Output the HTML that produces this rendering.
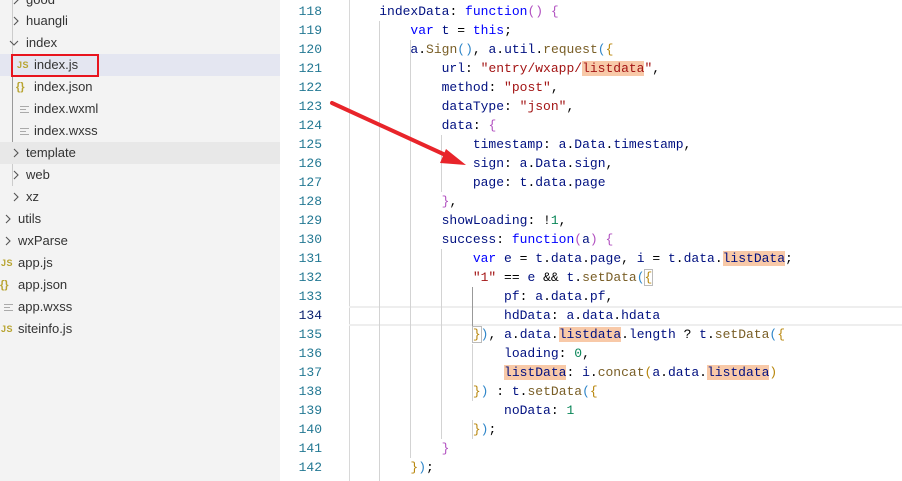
<!DOCTYPE html>
<html><head><meta charset="utf-8"><style>
*{margin:0;padding:0;box-sizing:border-box}
body{width:902px;height:481px;overflow:hidden;background:#fff;position:relative;font-family:"Liberation Sans",sans-serif}
#side{position:absolute;left:0;top:0;width:280px;height:481px;background:#f3f3f3}
.row{position:absolute;left:0;width:280px;height:22px;font-size:13px;color:#333;line-height:22px;white-space:nowrap}
.row span{position:absolute}
.row svg{position:absolute;top:6px}
.js{color:#b8a431;font-weight:bold;font-size:9px;letter-spacing:0.5px}
.br{color:#b8a431;font-size:11px;font-weight:bold}
.lines{position:absolute;width:9px;height:7px;border-top:1px solid #aaa;border-bottom:1px solid #aaa}
.lines:after{content:"";position:absolute;left:0;top:2px;width:6px;border-top:1px solid #aaa}
.guide{position:absolute;width:1px;background:#c8c8c8}
#code{position:absolute;left:280px;top:0;width:622px;height:481px}
.ln{position:absolute;left:0;width:42px;text-align:right;font-family:"Liberation Mono",monospace;font-size:13px;color:#237893;height:19px;line-height:19px}
.cl{position:absolute;left:68px;font-family:"Liberation Mono",monospace;font-size:13px;white-space:pre;height:19px;line-height:19px;color:#000}
.i{color:#001080}.k{color:#0000ff}.f{color:#795e26}.s{color:#a31515}.n{color:#098658}
.b1{color:#b8860b}.b2{color:#b150c0}.b3{color:#2f86c9}
.h{background:#f8c9a8}
.ig{position:absolute;width:1px;background:#d3d3d3}
</style></head><body>
<div id="side">
<div class="guide" style="left:12px;top:0;height:186px;background:#ccc"></div>
<div class="guide" style="left:12px;top:76px;height:66px;background:#999"></div>
<div class="row" style="top:-11px"><svg style="left:12px" width="8" height="10"><polyline points="2,1 6,5 2,9" fill="none" stroke="#555" stroke-width="1.1"/></svg><span style="left:26px">good</span></div>
<div class="row" style="top:10px"><svg style="left:12px" width="8" height="10"><polyline points="2,1 6,5 2,9" fill="none" stroke="#555" stroke-width="1.1"/></svg><span style="left:26px">huangli</span></div>
<div class="row" style="top:32px"><svg style="left:9px;top:8px" width="10" height="7"><polyline points="1,1 5,5 9,1" fill="none" stroke="#555" stroke-width="1.1"/></svg><span style="left:26px">index</span></div>
<div class="row" style="top:54px;background:#e4e6f1"><span class="js" style="left:17px">JS</span><span style="left:34px">index.js</span></div>
<div style="position:absolute;left:11px;top:54px;width:88px;height:23px;border:2px solid #e8141e"></div>
<div class="row" style="top:76px"><span class="br" style="left:16px">{}</span><span style="left:34px">index.json</span></div>
<div class="row" style="top:98px"><div class="lines" style="left:20px;top:8px"></div><span style="left:34px">index.wxml</span></div>
<div class="row" style="top:120px"><div class="lines" style="left:20px;top:8px"></div><span style="left:34px">index.wxss</span></div>
<div class="row" style="top:142px;background:#e8e8e8"><svg style="left:12px" width="8" height="10"><polyline points="2,1 6,5 2,9" fill="none" stroke="#555" stroke-width="1.1"/></svg><span style="left:26px">template</span></div>
<div class="row" style="top:164px"><svg style="left:12px" width="8" height="10"><polyline points="2,1 6,5 2,9" fill="none" stroke="#555" stroke-width="1.1"/></svg><span style="left:26px">web</span></div>
<div class="row" style="top:186px"><svg style="left:12px" width="8" height="10"><polyline points="2,1 6,5 2,9" fill="none" stroke="#555" stroke-width="1.1"/></svg><span style="left:26px">xz</span></div>
<div class="row" style="top:208px"><svg style="left:4px" width="8" height="10"><polyline points="2,1 6,5 2,9" fill="none" stroke="#555" stroke-width="1.1"/></svg><span style="left:18px">utils</span></div>
<div class="row" style="top:230px"><svg style="left:4px" width="8" height="10"><polyline points="2,1 6,5 2,9" fill="none" stroke="#555" stroke-width="1.1"/></svg><span style="left:18px">wxParse</span></div>
<div class="row" style="top:252px"><span class="js" style="left:1px">JS</span><span style="left:18px">app.js</span></div>
<div class="row" style="top:274px"><span class="br" style="left:0px">{}</span><span style="left:18px">app.json</span></div>
<div class="row" style="top:296px"><div class="lines" style="left:4px;top:8px"></div><span style="left:18px">app.wxss</span></div>
<div class="row" style="top:318px"><span class="js" style="left:1px">JS</span><span style="left:18px">siteinfo.js</span></div>
</div>
<div id="code">
<div style="position:absolute;left:69px;top:0;width:1px;height:481px;background:#d8d8d8"></div>
<div style="position:absolute;left:69px;top:306px;width:553px;height:20px;border-top:2px solid #eee;border-bottom:2px solid #eee"></div>
<div class="ig" style="left:99px;top:21px;height:460px"></div>
<div class="ig" style="left:130px;top:40px;height:418px"></div>
<div class="ig" style="left:161px;top:135px;height:57px"></div>
<div class="ig" style="left:161px;top:249px;height:190px"></div>
<div class="ig" style="left:192px;top:287px;height:48px;background:#999"></div>
<div class="ig" style="left:192px;top:344px;height:57px"></div>
<div class="ig" style="left:192px;top:420px;height:19px"></div>

<div class="ln" style="top:-17px">117</div><div class="cl" style="top:-17px">    <span class="b1">}</span>,</div>
<div class="ln" style="top:2px">118</div><div class="cl" style="top:2px">    <span class="i">indexData</span>: <span class="k">function</span><span class="b2">()</span> <span class="b2">{</span></div>
<div class="ln" style="top:21px">119</div><div class="cl" style="top:21px">        <span class="k">var</span> <span class="i">t</span> = <span class="k">this</span>;</div>
<div class="ln" style="top:40px">120</div><div class="cl" style="top:40px">        <span class="i">a</span>.<span class="f">Sign</span><span class="b3">()</span>, <span class="i">a</span>.<span class="i">util</span>.<span class="f">request</span><span class="b3">(</span><span class="b1">{</span></div>
<div class="ln" style="top:59px">121</div><div class="cl" style="top:59px">            <span class="i">url</span>: <span class="s">"entry/wxapp/<span class="h">listdata</span>"</span>,</div>
<div class="ln" style="top:78px">122</div><div class="cl" style="top:78px">            <span class="i">method</span>: <span class="s">"post"</span>,</div>
<div class="ln" style="top:97px">123</div><div class="cl" style="top:97px">            <span class="i">dataType</span>: <span class="s">"json"</span>,</div>
<div class="ln" style="top:116px">124</div><div class="cl" style="top:116px">            <span class="i">data</span>: <span class="b2">{</span></div>
<div class="ln" style="top:135px">125</div><div class="cl" style="top:135px">                <span class="i">timestamp</span>: <span class="i">a</span>.<span class="i">Data</span>.<span class="i">timestamp</span>,</div>
<div class="ln" style="top:154px">126</div><div class="cl" style="top:154px">                <span class="i">sign</span>: <span class="i">a</span>.<span class="i">Data</span>.<span class="i">sign</span>,</div>
<div class="ln" style="top:173px">127</div><div class="cl" style="top:173px">                <span class="i">page</span>: <span class="i">t</span>.<span class="i">data</span>.<span class="i">page</span></div>
<div class="ln" style="top:192px">128</div><div class="cl" style="top:192px">            <span class="b2">}</span>,</div>
<div class="ln" style="top:211px">129</div><div class="cl" style="top:211px">            <span class="i">showLoading</span>: !<span class="n">1</span>,</div>
<div class="ln" style="top:230px">130</div><div class="cl" style="top:230px">            <span class="i">success</span>: <span class="k">function</span><span class="b2">(</span><span class="i">a</span><span class="b2">)</span> <span class="b2">{</span></div>
<div class="ln" style="top:249px">131</div><div class="cl" style="top:249px">                <span class="k">var</span> <span class="i">e</span> = <span class="i">t</span>.<span class="i">data</span>.<span class="i">page</span>, <span class="i">i</span> = <span class="i">t</span>.<span class="i">data</span>.<span class="i h">listData</span>;</div>
<div class="ln" style="top:268px">132</div><div class="cl" style="top:268px">                <span class="s">"1"</span> == <span class="i">e</span> &amp;&amp; <span class="i">t</span>.<span class="f">setData</span><span class="b3">(</span><span class="b1" style="outline:1px solid #bbb">{</span></div>
<div class="ln" style="top:287px">133</div><div class="cl" style="top:287px">                    <span class="i">pf</span>: <span class="i">a</span>.<span class="i">data</span>.<span class="i">pf</span>,</div>
<div class="ln" style="top:306px;color:#0b216f">134</div><div class="cl" style="top:306px">                    <span class="i">hdData</span>: <span class="i">a</span>.<span class="i">data</span>.<span class="i">hdata</span></div>
<div class="ln" style="top:325px">135</div><div class="cl" style="top:325px">                <span class="b1" style="outline:1px solid #bbb">}</span><span class="b3">)</span>, <span class="i">a</span>.<span class="i">data</span>.<span class="i h">listdata</span>.<span class="i">length</span> ? <span class="i">t</span>.<span class="f">setData</span><span class="b3">(</span><span class="b1">{</span></div>
<div class="ln" style="top:344px">136</div><div class="cl" style="top:344px">                    <span class="i">loading</span>: <span class="n">0</span>,</div>
<div class="ln" style="top:363px">137</div><div class="cl" style="top:363px">                    <span class="i h">listData</span>: <span class="i">i</span>.<span class="f">concat</span><span class="b1">(</span><span class="i">a</span>.<span class="i">data</span>.<span class="i h">listdata</span><span class="b1">)</span></div>
<div class="ln" style="top:382px">138</div><div class="cl" style="top:382px">                <span class="b1">}</span><span class="b3">)</span> : <span class="i">t</span>.<span class="f">setData</span><span class="b3">(</span><span class="b1">{</span></div>
<div class="ln" style="top:401px">139</div><div class="cl" style="top:401px">                    <span class="i">noData</span>: <span class="n">1</span></div>
<div class="ln" style="top:420px">140</div><div class="cl" style="top:420px">                <span class="b1">}</span><span class="b3">)</span>;</div>
<div class="ln" style="top:439px">141</div><div class="cl" style="top:439px">            <span class="b2">}</span></div>
<div class="ln" style="top:458px">142</div><div class="cl" style="top:458px">        <span class="b1">}</span><span class="b3">)</span>;</div>
</div>
<svg style="position:absolute;left:0;top:0" width="902" height="481">
<line x1="332" y1="103" x2="452" y2="158" stroke="#e8242a" stroke-width="4" stroke-linecap="round"/>
<polygon points="466,165 446,149 440,163" fill="#e8242a"/>
</svg>
</body></html>
